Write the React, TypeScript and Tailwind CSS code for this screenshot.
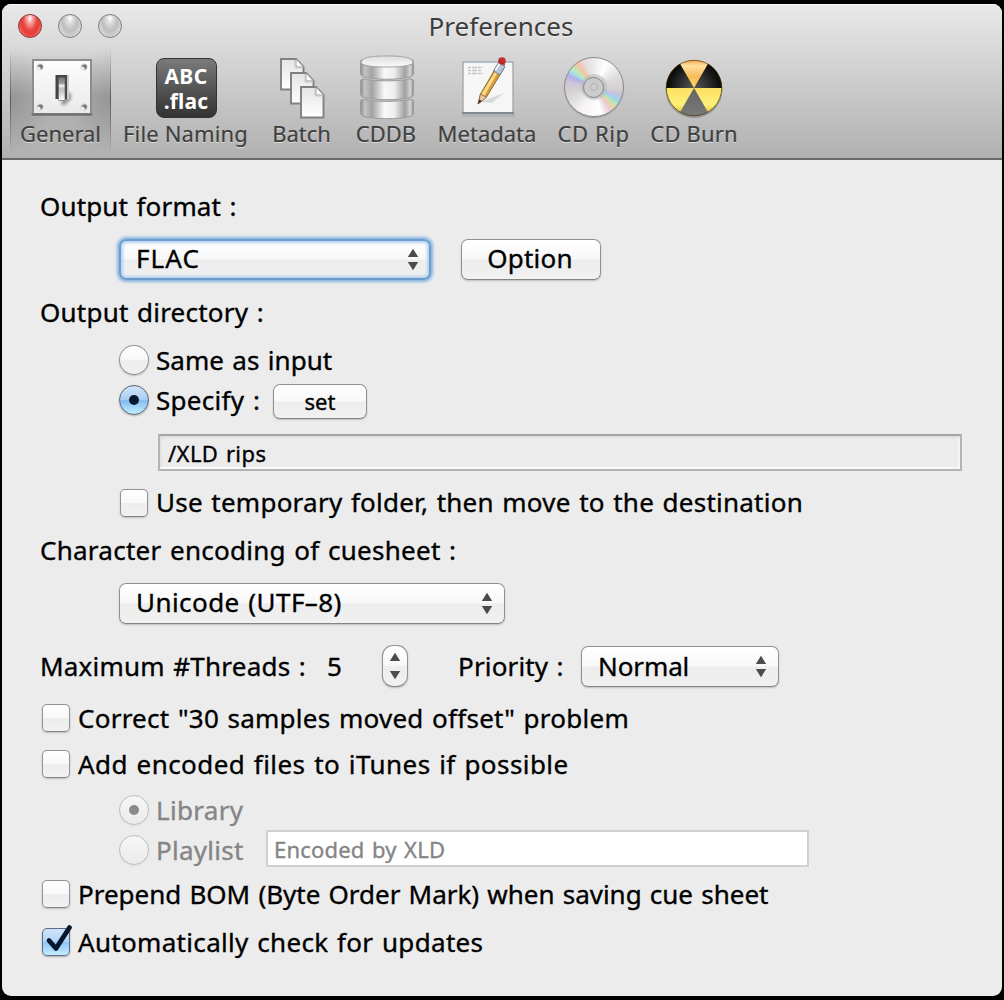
import React from 'react';

type LabelProps = { children: React.ReactNode; className?: string };

const Label = ({ children, className = '' }: LabelProps) => (
  <span className={`whitespace-pre leading-[36px] [-webkit-text-stroke:0.35px] [word-spacing:1.5px] ${className}`}>{children}</span>
);

const Arrows = ({ gap = 5 }: { gap?: number }) => (
  <svg width="12" height={18 + gap} viewBox={`0 0 12 ${18 + gap}`} className="shrink-0">
    <path d="M.8 9 6 .8l5.200 8.200z" fill="#4b4b4b" />
    <path d={`M.8 ${9 + gap}h10.400l-5.200 8.200z`} fill="#4b4b4b" />
  </svg>
);

const face =
  'bg-[linear-gradient(#fff_0%,#f8f8f8_48%,#ededed_52%,#f1f1f1_100%)] shadow-[0_1px_2px_#0003] border border-[#929292] border-b-[#848484]';

const focusFace =
  'bg-[linear-gradient(#fff_0%,#f8f8f8_48%,#ededed_52%,#f1f1f1_100%)] border-2 border-[#6a9dce] shadow-[0_0_3px_2px_#86b3e0,inset_0_0_3px_2px_#b5d0ec] pl-[15px] pr-[10px]';

const PopUp = ({ children, className = '', focused = false }: LabelProps & { focused?: boolean }) => (
  <button
    className={`flex h-[41px] items-center justify-between rounded-[7px] ${focused ? focusFace : `${face} pl-4 pr-[11px]`} ${className}`}
  >
    {children}
    <Arrows gap={5} />
  </button>
);

const Check = ({ on = false }: { on?: boolean }) => (
  <span
    className={
      on
        ? 'relative h-[28px] w-[28px] shrink-0 rounded-[5px] border border-[#5d6c8c] bg-[linear-gradient(#cfe4f9_0%,#b3d5f6_48%,#8fc4f3_52%,#c3ecff_100%)] shadow-[0_1px_2px_#0004]'
        : `h-[28px] w-[28px] shrink-0 rounded-[5px] ${face}`
    }
  >
    {on && (
      <svg width="34" height="34" viewBox="0 0 34 34" className="absolute -left-[1px] -top-[7px]">
        <path d="M7 18.500 14 26.500 27.500 5.500" fill="none" stroke="#06182d" strokeWidth="4.800" strokeLinecap="round" strokeLinejoin="round" />
      </svg>
    )}
  </span>
);

const Radio = ({ kind }: { kind: 'off' | 'on' | 'disabledOn' | 'disabledOff' }) => {
  const skin = {
    off: face,
    on: 'border border-[#5c6478] bg-[linear-gradient(#d3e5f7_0%,#a9cef2_48%,#83bcf0_52%,#c4efff_100%)] shadow-[0_1px_2px_#0004]',
    disabledOn: 'border border-[#bdbdbd] bg-[linear-gradient(#f6f6f6,#ebebeb)] shadow-[0_1px_2px_#0001]',
    disabledOff: 'border border-[#bdbdbd] bg-[linear-gradient(#f6f6f6,#ebebeb)] shadow-[0_1px_2px_#0001]',
  }[kind];
  return (
    <span className={`flex h-[30px] w-[30px] shrink-0 items-center justify-center rounded-full ${skin}`}>
      {kind === 'on' && <span className="h-[10px] w-[10px] rounded-full bg-[#06182d]" />}
      {kind === 'disabledOn' && <span className="h-[10px] w-[10px] rounded-full bg-[#8b8b8b]" />}
    </span>
  );
};

const SwitchIcon = () => (
  <svg width="64" height="62" viewBox="0 0 64 62" className="ml-[2px]">
    <defs>
      <linearGradient id="plate" x2="0" y2="1"><stop stopColor="#fdfdfd" /><stop offset="1" stopColor="#e9e9e9" /></linearGradient>
      <linearGradient id="lever" x2="0" y2="1"><stop stopColor="#777" /><stop offset=".25" stopColor="#999" /><stop offset=".35" stopColor="#eee" /><stop offset=".5" stopColor="#bbb" /><stop offset="1" stopColor="#fff" /></linearGradient>
      <filter id="soft" x="-1" y="-1" width="3" height="3"><feGaussianBlur stdDeviation="1.6" /></filter>
    </defs>
    <rect x="1" y="56" width="62" height="3" fill="#888" opacity=".6" />
    <rect x="3" y="3" width="58" height="54" fill="url(#plate)" stroke="#8d8d8d" strokeWidth="2" />
    <path d="M2 57.500h60" stroke="#6c6c6c" strokeWidth="2" />
    {[[10, 10], [54, 10], [10, 50], [54, 50]].map(([x, y]) => (
      <g key={`${x}-${y}`}><circle cx={x} cy={y} r="3.400" fill="#ccc" /><circle cx={x + 0.6} cy={y - 0.2} r="2.400" fill="#777" /><circle cx={x - 1} cy={y + 1.4} r="1.600" fill="#eee" /></g>
    ))}
    <path d="M34 36h7v6l-6 6h-4z" fill="#777" opacity=".75" filter="url(#soft)" />
    <rect x="25.500" y="18" width="12.500" height="24" fill="#454545" />
    <rect x="37" y="18" width="2" height="24" fill="#ccc" />
    <rect x="28.500" y="20.500" width="6.500" height="23" rx="1" fill="url(#lever)" stroke="#666" strokeWidth=".7" />
  </svg>
);

const NamingIcon = () => (
  <span className="ml-[1px] flex h-[60px] w-[61px] flex-col items-center justify-center rounded-[8px] border border-[#333] bg-gradient-to-b from-[#7b7b7b] to-[#333] pt-[1px] text-[21px] font-bold leading-[25px] text-white [text-shadow:none]">
    <span className="tracking-[0.4px]">ABC</span>
    <span>.flac</span>
  </span>
);

const BatchIcon = () => (
  <svg width="46" height="62" viewBox="0 0 46 62">
    <defs><linearGradient id="sheet" x2="0" y2="1"><stop stopColor="#e4e4e4" /><stop offset="1" stopColor="#fff" /></linearGradient></defs>
    {[[2, 2], [12, 16], [22, 30]].map(([x, y]) => (
      <g key={x} transform={`translate(${x} ${y})`}>
        <path d="M0 0H15L22.500 8V30.500H0z" fill="url(#sheet)" stroke="#808080" strokeWidth="1.900" />
        <path d="M15 0V8H22.500z" fill="#fff" stroke="#999" strokeWidth="1" />
        <path d="M14 1V9H22" fill="none" stroke="#ccc" strokeWidth="1" />
      </g>
    ))}
  </svg>
);

const drum = (t: number, b: number) =>
  `M1.500 ${t + 4}Q1.500 ${t + 1} 5 ${t + 1.5}C18 ${t + 4} 38 ${t + 4} 51 ${t + 1.5}Q54.500 ${t + 1} 54.500 ${t + 4}V${b - 4}Q54.500 ${b - 1} 51 ${b}C38 ${b + 3} 18 ${b + 3} 5 ${b}Q1.500 ${b - 1} 1.500 ${b - 4}Z`;

const DatabaseIcon = () => (
  <svg width="56" height="66" viewBox="0 0 56 66" className="ml-[1px]">
    <defs>
      <linearGradient id="drum"><stop stopColor="#8c8c8c" /><stop offset=".08" stopColor="#c4c4c4" /><stop offset=".22" stopColor="#a3a3a3" /><stop offset=".45" stopColor="#f8f8f8" /><stop offset=".64" stopColor="#eee" /><stop offset=".84" stopColor="#a0a0a0" /><stop offset=".94" stopColor="#d5d5d5" /><stop offset="1" stopColor="#888" /></linearGradient>
      <linearGradient id="lid" x2="0" y2="1"><stop stopColor="#dcdcdc" /><stop offset="1" stopColor="#fbfbfb" /></linearGradient>
    </defs>
    {[[3, 22], [22.5, 42.5], [43, 61.5]].map(([t, b]) => (
      <path key={t} d={drum(t, b)} fill="url(#drum)" stroke="#9a9a9a" strokeWidth="1" />
    ))}
    <path d="M2 8C2 1.500 16 1 28 1S54 1.500 54 8C51 11.500 38 12 28 12S5 11.500 2 8Z" fill="url(#lid)" stroke="#a2a2a2" strokeWidth="1" />
  </svg>
);

const MetadataIcon = () => (
  <svg width="56" height="62" viewBox="0 0 56 62" className="ml-[2px] overflow-visible">
    <rect x="2" y="56" width="53" height="4" fill="#888" opacity=".25" />
    <rect x="3" y="5" width="50" height="51" fill="#f6f6f6" stroke="#a3afb7" strokeWidth="1.500" />
    <path d="M2 56h52" stroke="#828b90" strokeWidth="2" />
    <path d="M8 10.500h15M8 13.500h14M8 16.500h15" stroke="#c5c5c5" strokeWidth="1.700" strokeDasharray="3 1 5 1" />
    <path d="m20 45 24-9-12 10z" fill="#999" opacity=".3" />
    <path d="m18 47 2.500-10 17-29 6 4-17 28z" fill="#d99c3d" stroke="#76501d" strokeWidth=".8" />
    <path d="m21.500 37 17-28 2 1.500-16 28z" fill="#f9dc83" />
    <path d="m18 47 2.500-10 6 3.500z" fill="#e6c6a4" stroke="#835f43" strokeWidth=".7" />
    <path d="m18 47 1.300-4.500 2.500 1.500z" fill="#3f2929" />
    <path d="m33.500 14 5-8.500 6.500 4-5 8.500z" fill="#b7c5d6" stroke="#586a82" strokeWidth=".8" />
    <path d="m35.500 13 4.500-7" stroke="#fff" strokeWidth="1.500" />
    <circle cx="42" cy="4" r="3.800" fill="#c72e2b" />
    <path d="m38.500 4 6.500 4" stroke="#82252c" />
  </svg>
);

const DiscIcon = () => (
  <span className="-mt-[2px] flex h-[60px] w-[60px] items-center justify-center rounded-full border border-[#8b8b8b] bg-[conic-gradient(from_0deg,#ecebed_0deg,#fff_28deg,#dfdcdd_65deg,#d3d0cf_95deg,#c8c2df_108deg,#9fd3ee_119deg,#b6eab5_128deg,#efd0a9_137deg,#e9cdda_146deg,#fff_165deg,#f6f3f3_210deg,#d6d3d3_255deg,#cdc4d9_282deg,#afafea_294deg,#a9e0e6_304deg,#c2e8b4_312deg,#f2c3a3_325deg,#e6dddd_340deg,#ecebed_360deg)] shadow-[0_1px_1px_#0003]">
    <span className="flex h-[26px] w-[26px] items-center justify-center rounded-full bg-[#b9b9bc99]">
      <span className="flex h-[21px] w-[21px] items-center justify-center rounded-full border border-[#858585] bg-[#c9cbcc]">
        <span className="h-[8px] w-[8px] rounded-full border border-[#b2b2b2] bg-[#cdcdcd]" />
      </span>
    </span>
  </span>
);

const BurnIcon = () => (
  <svg width="60" height="62" viewBox="0 0 60 62">
    <defs>
      <linearGradient id="gold" x2="0" y2="1"><stop stopColor="#f0a244" /><stop offset=".1" stopColor="#ffe0a0" /><stop offset=".3" stopColor="#fbbb59" /><stop offset=".5" stopColor="#fce064" /><stop offset=".8" stopColor="#fff178" /><stop offset="1" stopColor="#e7b62e" /></linearGradient>
      <radialGradient id="dark" gradientUnits="userSpaceOnUse" cx="30" cy="31" r="28"><stop stopColor="#5a5a5a" /><stop offset="1" stopColor="#060606" /></radialGradient>
      <linearGradient id="gray" x2="0" y2="1"><stop stopColor="#646464" /><stop offset="1" stopColor="#7a7a7a" /></linearGradient>
    </defs>
    <circle cx="30" cy="32.500" r="28.500" fill="#000" opacity=".25" />
    <circle cx="30" cy="31" r="28" fill="url(#gold)" />
    <path d="M30 31H2A28 28 0 0 1 16 6.750Z" fill="url(#dark)" />
    <path d="M30 31H58A28 28 0 0 0 44 6.750Z" fill="url(#dark)" />
    <path d="M30 31 16 55.250A28 28 0 0 0 44 55.250Z" fill="url(#gray)" />
    <circle cx="30" cy="31" r="27.700" fill="none" stroke="#4c330c" strokeOpacity=".7" strokeWidth="1" />
  </svg>
);

const Tool = ({ icon, children, className = '' }: LabelProps & { icon: React.ReactNode }) => (
  <div className={`flex h-[106px] shrink-0 flex-col items-center ${className}`}>
    <span className="flex h-[76px] items-center justify-center pt-[4px]">{icon}</span>
    <span className="-mt-[4px] whitespace-pre leading-[26px] [-webkit-text-stroke:0.2px]">{children}</span>
  </div>
);

const light = 'h-[24px] w-[24px] rounded-full border';

export default function App() {
  return (
    <div className="h-[1000px] w-[1004px] bg-black px-[2px] pb-[4px] pt-[4px] font-['Noto_Sans','Open_Sans',sans-serif] text-[26px] text-black">
      <div className="flex h-full w-full flex-col overflow-hidden rounded-[9px] bg-[#ececec]">
        <header className="h-[156px] shrink-0 border-b-2 border-[#696969] bg-gradient-to-b from-[#e9e9e9] to-[#b1b1b1] shadow-[inset_0_1px_#f8f8f8]">
          <div className="grid h-[44px] grid-cols-[159px_1fr_161px] items-center">
            <div className="flex gap-[16px] pl-[16px]">
              <span className={`${light} border-[#8e3431] bg-[radial-gradient(ellipse_at_50%_15%,#fff_0%,#f6a7a5_18%,#e94742_45%,#e73c38_60%,#ffaaa7_100%)]`} />
              <span className={`${light} border-[#7d7d7d] bg-[radial-gradient(ellipse_at_50%_15%,#fff_0%,#ddd_20%,#bebebe_50%,#f0f0f0_100%)]`} />
              <span className={`${light} border-[#7d7d7d] bg-[radial-gradient(ellipse_at_50%_15%,#fff_0%,#ddd_20%,#bebebe_50%,#f0f0f0_100%)]`} />
            </div>
            <h1 className="text-center text-[26px] text-[#3d3d3d] [text-shadow:0_1px_#fff8]">Preferences</h1>
          </div>
          <nav className="flex pl-[8px] text-[22px] text-[#3f3f3f] [text-shadow:0_1px_#fff8]">
            <Tool
              icon={<SwitchIcon />}
              className="w-[101px] bg-[linear-gradient(#0000,#0006_50%,#0000),linear-gradient(#0000,#0006_50%,#0000),radial-gradient(ellipse_40%_50%_at_0%_50%,#0002,#0000),radial-gradient(ellipse_40%_50%_at_100%_50%,#0002,#0000),linear-gradient(#0000,#0002_45%,#0000)] bg-[length:1px_100%,1px_100%,100%_100%,100%_100%,100%_100%] bg-[position:0_0,100%_0,0_0,0_0,0_0] bg-no-repeat"
            >
              General
            </Tool>
            <Tool icon={<NamingIcon />} className="w-[149px] tracking-[0.15px]">File Naming</Tool>
            <Tool icon={<BatchIcon />} className="w-[83px]">Batch</Tool>
            <Tool icon={<DatabaseIcon />} className="w-[86px]">CDDB</Tool>
            <Tool icon={<MetadataIcon />} className="w-[116px]">Metadata</Tool>
            <Tool icon={<DiscIcon />} className="w-[97px] tracking-[0.6px]">CD Rip</Tool>
            <Tool icon={<BurnIcon />} className="w-[104px] tracking-[0.15px]">CD Burn</Tool>
          </nav>
        </header>

        <main className="flex flex-col pl-[38px]">
          <div className="mt-[27px] flex h-[38px] items-center"><Label className="tracking-[0.15px]">Output format :</Label></div>
          <div className="mt-[13px] flex h-[42px] items-center pl-[79px]">
            <PopUp focused className="w-[312px]"><Label className="-mt-[2px] tracking-[1.1px]">FLAC</Label></PopUp>
            <button className={`ml-[30px] flex h-[41px] w-[140px] items-center justify-center rounded-[7px] pr-[2px] ${face}`}><Label className="-mt-[2px] tracking-[0.25px]">Option</Label></button>
          </div>
          <div className="mt-[13px] flex h-[38px] items-center"><Label className="tracking-[0.22px]">Output directory :</Label></div>
          <div className="mt-[9px] flex h-[40px] items-center gap-[7px] pl-[79px]"><Radio kind="off" /><Label className="tracking-[0.05px]">Same as input</Label></div>
          <div className="flex h-[40px] items-center pl-[79px]">
            <Radio kind="on" />
            <span className="ml-[7px] w-[117px]"><Label className="tracking-[0.3px]">Specify :</Label></span>
            <button className={`mt-[2px] flex h-[35px] w-[94px] items-center justify-center rounded-[7px] text-[22px] ${face}`}><Label>set</Label></button>
          </div>
          <div className="ml-[118px] mt-[14px] flex h-[37px] w-[804px] items-center border-2 border-[#b4b4b4] border-t-[#a4a4a4] pl-[8px] text-[22px] shadow-[inset_0_2px_1px_#e0e0e0,inset_0_-2px_#f8f8f8,inset_-2px_0_#f6f6f6,inset_2px_0_#e4e4e4]"><Label className="tracking-[0.4px]">/XLD rips</Label></div>
          <div className="mt-[12px] flex h-[40px] items-center gap-[8px] pl-[80px]"><Check /><Label className="-mt-[2px] tracking-[0.24px]">Use temporary folder, then move to the destination</Label></div>
          <div className="mt-[7px] flex h-[40px] items-center"><Label className="tracking-[0.26px]">Character encoding of cuesheet :</Label></div>
          <div className="mt-[13px] flex h-[40px] items-center pl-[79px]"><PopUp className="w-[386px]"><Label className="-mt-[2px] tracking-[0.43px]">Unicode (UTF–8)</Label></PopUp></div>
          <div className="mt-[21px] flex h-[44px] items-center">
            <span className="w-[287px]"><Label className="tracking-[0.22px]">Maximum #Threads :</Label></span>
            <span className="w-[55px]"><Label>5</Label></span>
            <span className={`flex h-[42px] w-[26px] items-center justify-center rounded-[11px] ${face}`}><Arrows gap={10} /></span>
            <span className="ml-[50px] w-[123px]"><Label className="tracking-[0.15px]">Priority :</Label></span>
            <PopUp className="w-[198px]"><Label className="tracking-[-0.1px]">Normal</Label></PopUp>
          </div>
          <div className="mt-[10px] flex h-[40px] items-center gap-[8px] pl-[2px]"><Check /><Label className="tracking-[0.25px]">Correct "30 samples moved offset" problem</Label></div>
          <div className="mt-[6px] flex h-[40px] items-center gap-[8px] pl-[2px]"><Check /><Label className="tracking-[0.43px]">Add encoded files to iTunes if possible</Label></div>
          <div className="mt-[6px] flex h-[40px] items-center gap-[7px] pl-[79px] text-[#858585]"><Radio kind="disabledOn" /><Label className="tracking-[0.3px]">Library</Label></div>
          <div className="flex h-[40px] items-center pl-[79px] text-[#858585]">
            <Radio kind="disabledOff" />
            <span className="ml-[7px] w-[110px]"><Label className="tracking-[0.25px]">Playlist</Label></span>
            <div className="-mt-[3px] flex h-[37px] w-[543px] items-center border-2 border-[#d0d0d0] bg-white pl-[6px] text-[22px]"><Label className="tracking-[0.2px]">Encoded by XLD</Label></div>
          </div>
          <div className="mt-[4px] flex h-[40px] items-center gap-[8px] pl-[2px]"><Check /><Label className="tracking-[-0.02px]">Prepend BOM (Byte Order Mark) when saving cue sheet</Label></div>
          <div className="mt-[8px] flex h-[40px] items-center gap-[8px] pl-[2px]"><Check on /><Label className="tracking-[0.32px]">Automatically check for updates</Label></div>
        </main>
      </div>
    </div>
  );
}
